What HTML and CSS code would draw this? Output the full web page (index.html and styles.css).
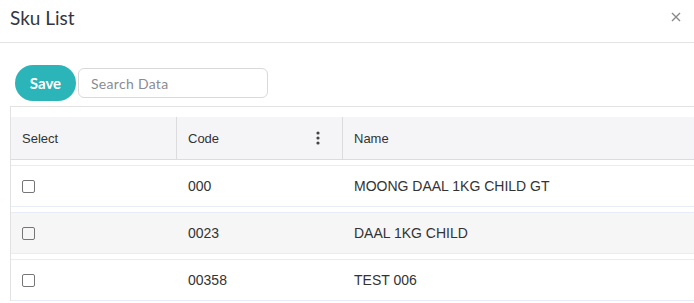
FILE: index.html
```html
<html>
<head>
    <title>Sku List</title>
    <link rel="stylesheet" href="styles.css">
</head>
<body>
    <div class="modal">
        <div class="modalHeader">
            <div class="modalTitle">Sku List</div>
            <svg class="closeIcon" width="10" height="10" viewBox="0 0 10 10">
                <path d="M1 1 L9 9 M9 1 L1 9" stroke="#8a8a8a" stroke-width="1.4" fill="none"/>
            </svg>
        </div>

        <div class="modalBody">
            <div class="toolbar">
                <button class="saveButton">Save</button>
                <input type="text" class="searchBox" placeholder="Search Data">
            </div>

            <div class="grid">
                <div class="gridHead">
                    <div class="cell colSelect">Select</div>
                    <div class="cell colCode">Code
                        <svg class="menuIcon" width="4" height="14" viewBox="0 0 4 14">
                            <circle cx="2" cy="2" r="1.6" fill="#444"/>
                            <circle cx="2" cy="7" r="1.6" fill="#444"/>
                            <circle cx="2" cy="12" r="1.6" fill="#444"/>
                        </svg>
                    </div>
                    <div class="cell colName">Name</div>
                </div>

                <div class="gridRow">
                    <div class="cell colSelect"><span class="check"></span></div>
                    <div class="cell colCode">000</div>
                    <div class="cell colName">MOONG DAAL 1KG CHILD GT</div>
                </div>
                <div class="gridRow odd">
                    <div class="cell colSelect"><span class="check"></span></div>
                    <div class="cell colCode">0023</div>
                    <div class="cell colName">DAAL 1KG CHILD</div>
                </div>
                <div class="gridRow">
                    <div class="cell colSelect"><span class="check"></span></div>
                    <div class="cell colCode">00358</div>
                    <div class="cell colName">TEST 006</div>
                </div>
            </div>
        </div>
    </div>
</body>
</html>
```

FILE: styles.css
```css
body {
    margin: 0;
    background-color: white;
    overflow: hidden;
    font-family: 'Liberation Sans', Arial, sans-serif;
}

.modalHeader {
    display: flex;
    align-items: center;
    justify-content: space-between;
    height: 42px;
    padding: 0 13px 0 10px;
    border-bottom: 1px solid #e4e4e4;
}

.modalTitle {
    font-family: 'Lato', 'Open Sans', sans-serif;
    font-size: 19px;
    color: #333642;
    margin-top: -8px;
}

.closeIcon {
    margin-top: -9px;
}

.modalBody {
    padding-top: 22px;
}

.toolbar {
    display: flex;
    align-items: center;
    gap: 2px;
    padding-left: 15px;
}

.saveButton {
    width: 61px;
    height: 36px;
    border: none;
    border-radius: 18px;
    background-color: #2cb5b9;
    color: white;
    font-family: 'Lato', 'Open Sans', sans-serif;
    font-weight: bold;
    font-size: 15px;
    padding: 0;
}

.searchBox {
    width: 190px;
    height: 30px;
    box-sizing: border-box;
    border: 1px solid #d9d9d9;
    border-radius: 6px;
    padding: 0 12px;
    font-family: 'Lato', 'Open Sans', sans-serif;
    font-size: 14px;
    letter-spacing: 0.3px;
    color: #333;
}

.searchBox::placeholder {
    color: #8a8d93;
}

.grid {
    margin-top: 5px;
    margin-left: 10px;
    padding-top: 10px;
    border-top: 1px solid #e2e2e2;
    border-left: 1px solid #e2e2e2;
    font-size: 14px;
}

.gridHead {
    display: flex;
    height: 42px;
    background-color: #f5f5f8;
    border-bottom: 1px solid #dcdcdf;
    font-size: 13px;
    color: #333;
}

.gridHead .colSelect,
.gridHead .colCode {
    border-right: 1px solid #dcdcdf;
}

.gridRow {
    display: flex;
    height: 40px;
    margin-top: 5px;
    border-top: 1px solid #e7ecf6;
    border-bottom: 1px solid #e7ecf6;
    color: #333;
}

.gridRow.odd {
    background-color: #f6f6f6;
}

.cell {
    display: flex;
    align-items: center;
    padding-left: 11px;
    box-sizing: border-box;
}

.colSelect {
    width: 166px;
}

.colCode {
    width: 166px;
    justify-content: space-between;
    padding-right: 22px;
}

.colName {
    flex-grow: 1;
}

.check {
    display: inline-block;
    width: 11px;
    height: 11px;
    border: 1px solid #767676;
    border-radius: 2px;
}
```
